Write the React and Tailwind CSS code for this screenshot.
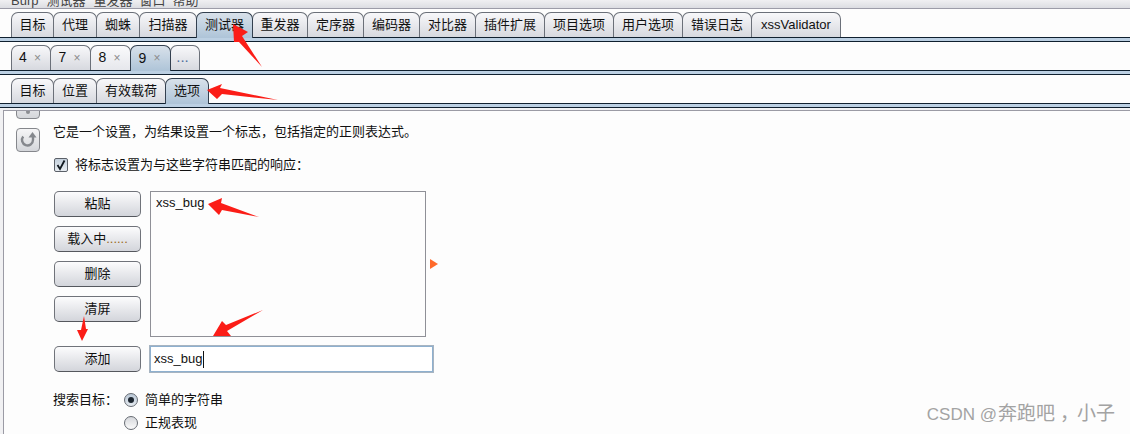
const cjk = "font-['Liberation_Sans','Noto_Sans_CJK_SC',sans-serif]";

const mainTabs = [
  { label: '目标', w: 'w-[43px]' },
  { label: '代理', w: 'w-[44px]' },
  { label: '蜘蛛', w: 'w-[44px]' },
  { label: '扫描器', w: 'w-[58px]' },
  { label: '测试器', w: 'w-[57px]', active: true },
  { label: '重发器', w: 'w-[56px]' },
  { label: '定序器', w: 'w-[57px]' },
  { label: '编码器', w: 'w-[57px]' },
  { label: '对比器', w: 'w-[57px]' },
  { label: '插件扩展', w: 'w-[70px]' },
  { label: '项目选项', w: 'w-[70px]' },
  { label: '用户选项', w: 'w-[70px]' },
  { label: '错误日志', w: 'w-[70px]' },
  { label: 'xssValidator', w: 'w-[90px]' },
];

const subTabs = [
  { label: '目标', w: 'w-[43px]' },
  { label: '位置', w: 'w-[44px]' },
  { label: '有效载荷', w: 'w-[70px]' },
  { label: '选项', w: 'w-[44px]', active: true },
];

const numTabs = [
  { label: '4', w: 'w-[40px]' },
  { label: '7', w: 'w-[41px]' },
  { label: '8', w: 'w-[41px]', light: true },
  { label: '9', w: 'w-[41px]', active: true },
];

function tabColor(tab) {
  if (tab.active) return 'bg-gradient-to-b from-[#d8e1ea] to-[#aec4d8] border-[#33404f] h-[26px] -mb-px z-10';
  if (tab.light) return 'bg-gradient-to-b from-[#fafafc] to-[#e6e7ec] border-[#6b7079] h-[25px]';
  return 'bg-gradient-to-b from-[#f8f8fa] to-[#d7d9df] border-[#6b7079] h-[25px]';
}

function Tab({ tab, children }) {
  return (
    <div className={`relative -mr-px flex items-center justify-center rounded-t-[7px] border border-b-0 pb-px text-[13px] text-[#111] ${tab.w} ${tabColor(tab)}`}>
      {children || tab.label}
    </div>
  );
}

function TabBar() {
  return (
    <div className="h-[5px] border-y border-[#10202f] bg-[#bcd0e3]" />
  );
}

function TabRow({ children }) {
  return <div className="flex h-[25px] items-end pl-[11px]">{children}</div>;
}

function Button({ label, dots }) {
  return (
    <div className="flex h-[26px] w-[87px] items-center justify-center rounded-[5px] border border-[#70737a] border-b-[#55585e] bg-gradient-to-b from-[#fcfcfd] to-[#d3d5db] text-[13px] text-[#111]">
      {label}
      {dots && <span className="text-[#9a6a20]">......</span>}
    </div>
  );
}

function Radio({ checked, label }) {
  return (
    <div className="flex h-[14px] items-center">
      <div className={`flex h-[14px] w-[14px] items-center justify-center rounded-full border border-[#666b73] bg-gradient-to-b ${checked ? 'from-[#b9c7d6] to-[#e6ebf0]' : 'from-[#d5d7db] to-[#fbfbfb]'}`}>
        {checked && <div className="h-[6px] w-[6px] rounded-full bg-[#1d2630]" />}
      </div>
      <span className="ml-[7px] text-[13px] text-[#111]">{label}</span>
    </div>
  );
}

function Arrows() {
  return (
    <svg className="absolute left-0 top-0 z-20" width="1130" height="434" viewBox="0 0 1130 434">
      <g fill="#fb1d17">
        <polygon points="233,24 248,32 242,36 262,67 239,42 234,42" />
        <polygon points="207,90 222,84 220,88 278,100 222,94 217,99" />
        <polygon points="208,204 222,198 221,203 259,217 222,210 219,215" />
        <polygon points="84,316 86,329 88,329 82,341 77,330 81,330" />
        <polygon points="263,310 226,325 222,321 213,336 231,336 227,331" />
      </g>
      <polygon points="430,259 438,264 430,269" fill="#ff6a2b" />
    </svg>
  );
}

export default function App() {
  return (
    <div className={`relative flex h-[434px] w-[1130px] flex-col overflow-hidden bg-[#fdfdfd] ${cjk}`}>
      {/* window title, mostly cut off at the top */}
      <div className="flex h-[9px] items-end overflow-hidden border-b border-[#9c9ca8] bg-gradient-to-b from-[#f0f0f2] to-[#dcdde2] pl-[11px] text-[13px] leading-[14px] text-[#444]">
        <span className="mr-[8px] shrink-0">Burp</span>
        <span className="mr-[8px] shrink-0">测试器</span>
        <span className="mr-[7px] shrink-0">重发器</span>
        <span className="mr-[7px] shrink-0">窗口</span>
        <span className="shrink-0">帮助</span>
      </div>

      <div className="mt-[3px]">
        <TabRow>
          {mainTabs.map((t) => <Tab key={t.label} tab={t} />)}
        </TabRow>
        <TabBar />
      </div>

      <div className="mt-[3px]">
        <TabRow>
          {numTabs.map((t) => (
            <Tab key={t.label} tab={t}>
              <span className="text-[14px]">{t.label}</span>
              <span className="ml-[7px] mr-[2px] text-[12px] text-[#8c8c8c]">×</span>
            </Tab>
          ))}
          <Tab tab={{ label: '...', w: 'w-[30px]' }}>
            <span className="pr-[5px] text-[15px] text-[#4d6f9c]">...</span>
          </Tab>
        </TabRow>
        <TabBar />
      </div>

      <div className="mt-[3px]">
        <TabRow>
          {subTabs.map((t) => <Tab key={t.label} tab={t} />)}
        </TabRow>
        <TabBar />
      </div>

      <div className="flex min-h-0 flex-1 bg-[#f1f1f3] pl-[3px] pt-[2px]">
        <div className="flex min-w-0 flex-1 overflow-hidden border-l border-t border-[#9b9ba5] bg-[#fdfdfd]">
          {/* side toolbar, scrolled part way */}
          <div className="ml-[12px] -mt-[16px] flex w-[24px] flex-col gap-[9px]">
            <div className="flex h-[24px] items-end justify-center rounded-[4px] border border-[#85878c] bg-gradient-to-b from-[#f6f6f7] to-[#d4d6da] pb-[4px]">
              <div className="h-[4px] w-[4px] rounded-full bg-[#8b8d91]" />
            </div>
            <div className="flex h-[24px] items-center justify-center rounded-[4px] border border-[#85878c] bg-gradient-to-b from-[#f6f6f7] to-[#d4d6da]">
              <svg width="18" height="18" viewBox="0 0 18 18" fill="none">
                <path d="M4.2 5.5a5.5 5.5 0 1 0 9.8 3.5V6" stroke="#85888d" strokeWidth="2.4" />
                <path d="M13.5 1l4 5.5h-8z" fill="#85888d" />
              </svg>
            </div>
          </div>

          <div className="ml-[13px] flex flex-col pt-[14px]">
            <div className="h-[14px] text-[13px] leading-[14px] text-[#111]">它是一个设置，为结果设置一个标志，包括指定的正则表达式。</div>

            <div className="mt-[19px] flex h-[14px] items-center pl-px">
              <div className="flex h-[14px] w-[14px] items-center justify-center rounded-[2px] border border-[#5b6068] bg-gradient-to-b from-[#c4d0dc] to-[#e8edf2]">
                <svg width="12" height="12" viewBox="0 0 12 12" fill="none">
                  <path d="M2.5 6l2.5 4L9.5 1.5" stroke="#10181f" strokeWidth="1.8" />
                </svg>
              </div>
              <span className="ml-[7px] text-[13px] text-[#111]">将标志设置为与这些字符串匹配的响应：</span>
            </div>

            <div className="mt-[19px] flex pl-px">
              <div className="flex w-[87px] flex-col gap-[9px]">
                <Button label="粘贴" />
                <Button label="载入中" dots />
                <Button label="删除" />
                <Button label="清屏" />
              </div>
              <div className="ml-[9px] h-[146px] w-[276px] border border-[#8f9097] bg-[#fdfdfd] pl-[5px] pt-[3px] text-[13px] leading-[16px] text-[#111]">
                xss_bug
              </div>
            </div>

            <div className="mt-[8px] flex items-center pl-px">
              <Button label="添加" />
              <div className="ml-[8px] flex h-[28px] w-[285px] items-center border-2 border-[#8eb0cf] bg-white pl-[3px] text-[13px] text-[#111] outline outline-1 -outline-offset-1 outline-[#a7b4c1]">
                xss_bug
                <span className="ml-px h-[17px] w-px bg-[#111]" />
              </div>
            </div>

            <div className="mt-[20px] flex">
              <div className="w-[71px] text-[13px] leading-[14px] text-[#111]">搜索目标：</div>
              <div className="flex flex-col gap-[9px]">
                <Radio checked label="简单的字符串" />
                <Radio label="正规表现" />
              </div>
            </div>
          </div>
        </div>
      </div>

      <Arrows />
      <div className="absolute bottom-[8px] right-[15px] z-20 flex items-baseline text-[17px] leading-[22px] text-[#a3a3a3]">
        <span>CSDN @</span>
        <span className="ml-px text-[19px]">奔跑吧</span>
        <span className="ml-[5px] -mr-[2px] text-[19px]">，</span>
        <span className="text-[19px]">小子</span>
      </div>
    </div>
  );
}
